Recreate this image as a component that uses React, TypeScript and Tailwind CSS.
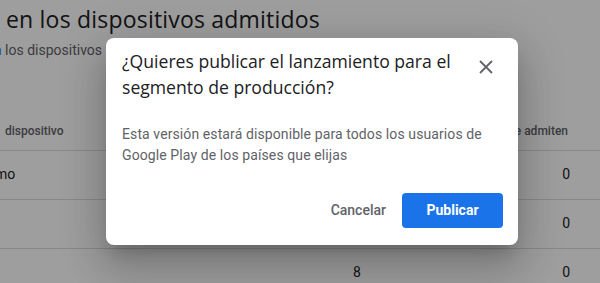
import React from "react";

const rows = [
  { name: "mo", value: "", count: "0" },
  { name: "", value: "", count: "0" },
  { name: "", value: "8", count: "0" },
];

export default function App() {
  return (
    <div className="relative w-[600px] h-[283px] overflow-hidden bg-white font-['Roboto',sans-serif]">
      {/* page behind the dialog */}
      <div className="pl-[6px] pt-[4px]">
        <h1 className="text-[23px] leading-[30px] text-[#202124] font-['Open_Sans',sans-serif] tracking-[0.2px]">
          en los dispositivos admitidos
        </h1>
        <p className="mt-[6px] -ml-[12px] text-[14px] leading-[20px] text-[#5f6368]">
          <span className="text-[#1a73e8]">a</span> los dispositivos
        </p>
      </div>
      <div className="mt-[50px]">
        <div className="flex items-center h-[41px] pt-[2px] border-b border-[#dadce0] text-[12px] font-medium text-[#5f6368]">
          <div className="pl-[5px] w-[360px]">dispositivo</div>
          <div className="ml-auto pr-[32px]">Se admiten</div>
        </div>
        {rows.map((r, i) => (
          <div key={i} className="flex items-center h-[49px] pb-[2px] border-b border-[#dadce0] text-[14px] text-[#202124]">
            <div className="w-[358px] -ml-[5px]">{r.name}</div>
            <div className="w-[30px]">{r.value}</div>
            <div className="ml-auto pr-[30px]">{r.count}</div>
          </div>
        ))}
      </div>

      {/* scrim */}
      <div className="absolute inset-0 bg-black/[0.38]" />

      {/* dialog */}
      <div className="absolute left-[106px] top-[38px] w-[412px] h-[207px] bg-white rounded-[8px] shadow-[0_11px_15px_-7px_rgba(0,0,0,0.2),0_24px_38px_3px_rgba(0,0,0,0.14),0_9px_46px_8px_rgba(0,0,0,0.12)] flex flex-col">
        <div className="flex items-start pl-[16px] pr-[20px] pt-[10px]">
          <h2 className="flex-1 text-[17.6px] leading-[26px] text-[#202124] font-['Open_Sans',sans-serif]">
            ¿Quieres publicar el lanzamiento para el segmento de producción?
          </h2>
          <button className="mt-[7px] w-[24px] h-[24px] flex items-center justify-center text-[#5f6368]">
            <svg width="14" height="14" viewBox="0 0 14 14" fill="none" stroke="currentColor" strokeWidth="1.8">
              <path d="M1 1L13 13M13 1L1 13" />
            </svg>
          </button>
        </div>
        <p className="pl-[16px] pr-[24px] mt-[24px] text-[14px] leading-[21px] text-[#5f6368] tracking-[0.1px]">
          Esta versión estará disponible para todos los usuarios de Google Play de los países que elijas
        </p>
        <div className="mt-auto mb-[17px] flex items-center justify-end pr-[15px] gap-[8px]">
          <button className="h-[35px] px-[8px] text-[14px] font-medium text-[#5f6368]">Cancelar</button>
          <button className="h-[35px] w-[101px] rounded-[4px] bg-[#1a73e8] text-white text-[14px] font-bold">
            Publicar
          </button>
        </div>
      </div>
    </div>
  );
}
